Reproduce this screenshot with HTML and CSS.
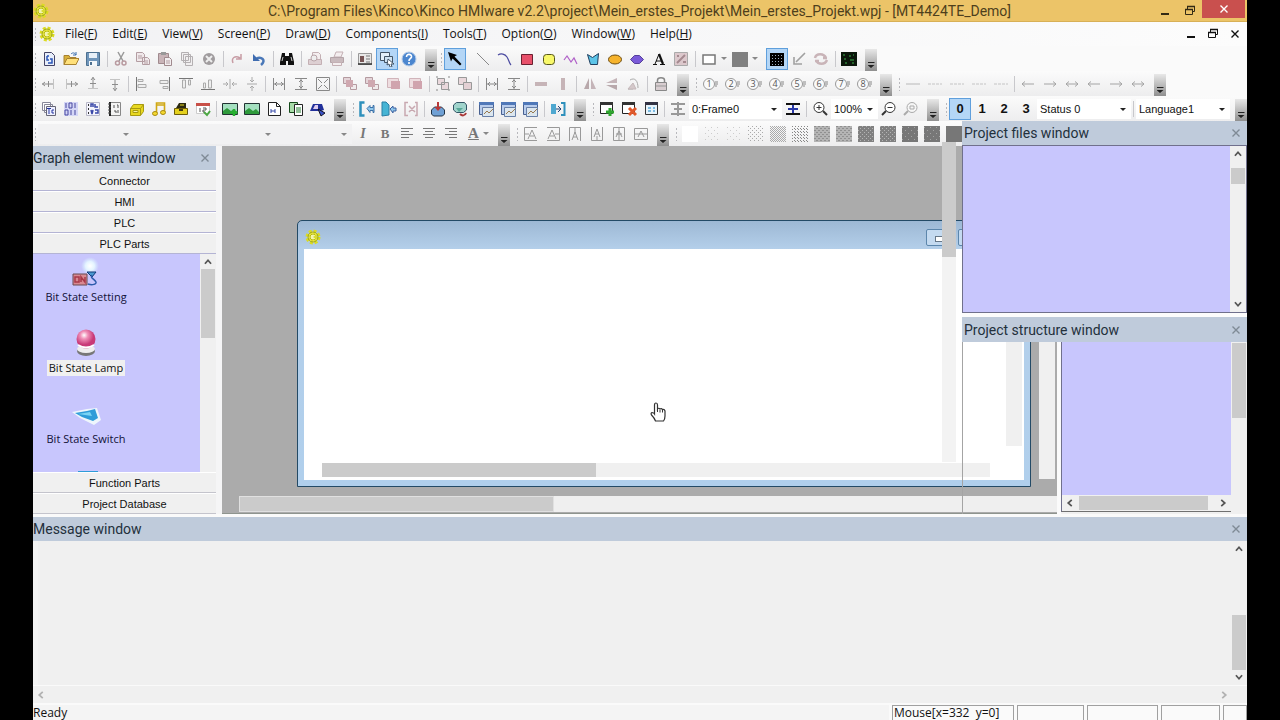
FILE: index.html
```html
<!DOCTYPE html>
<html lang="en">
<head>
<meta charset="utf-8">
<title>Kinco HMIware</title>
<link rel="stylesheet" href="styles.css">
</head>
<body>
<svg class="defs" aria-hidden="true">
<defs>
<pattern id="p1" width="6" height="6" patternUnits="userSpaceOnUse"><path fill="#ccc" d="M1 1h1v1h-1zM4 4h1v1h-1z"/></pattern>
<pattern id="p2" width="4" height="4" patternUnits="userSpaceOnUse"><path fill="#aaa" d="M0 0h1v1h-1zM2 2h1v1h-1z"/></pattern>
<pattern id="p3" width="3" height="3" patternUnits="userSpaceOnUse"><path fill="#888" d="M0 0h1v1h-1zM2 2h1v1h-1z"/></pattern>
<pattern id="p4" width="2" height="2" patternUnits="userSpaceOnUse"><path fill="#aaa" d="M0 0h1v1h-1zM1 1h1v1h-1z"/></pattern>
<pattern id="p5" width="4" height="4" patternUnits="userSpaceOnUse"><path fill="#b4b4b4" d="M0 0h4v4h-4z"/><path fill="#909090" d="M0 0h2v1h-2zM2 2h2v1h-2z"/></pattern>
<pattern id="p6" width="4" height="4" patternUnits="userSpaceOnUse"><path fill="#808080" d="M0 0h4v4h-4z"/><path fill="#b4b4b4" d="M0 0h1v1h-1zM2 2h1v1h-1z"/></pattern>
<pattern id="p7" width="6" height="6" patternUnits="userSpaceOnUse"><path fill="#777" d="M0 0h6v6h-6z"/><path fill="#a4a4a4" d="M0 1h1v1h-1zM3 4h1v1h-1z"/></pattern>
<radialGradient id="lampg" cx=".4" cy=".3"><stop offset="0" stop-color="#fff"/><stop offset=".4" stop-color="#f090b8"/><stop offset="1" stop-color="#c83a78"/></radialGradient>
<radialGradient id="glow"><stop offset="0" stop-color="#fff"/><stop offset=".5" stop-color="#e4f4ff"/><stop offset="1" stop-color="#d4e8ff" stop-opacity="0"/></radialGradient>
</defs>
<symbol id="gear" viewBox="0 0 16 16"><circle cx="8" cy="8" r="5.5" fill="#fff36a" stroke="#dcdc20" stroke-width="4" stroke-dasharray="2.6 1.7"/><circle cx="8" cy="8" r="5" fill="none" stroke="#98a420"/><circle cx="8" cy="8" r="3" fill="#f4f4b0" stroke="#b8bc10"/><path d="M8 8l4-3v6z" fill="#d8dc30"/></symbol>
<symbol id="new" viewBox="0 0 16 16"><path d="M3.500 1.500h7l3 3v10h-10z" fill="#e8eefa" stroke="#446"/><path d="M6 5v4h2M6 5h2M9 8h2v4h-4" fill="none" stroke="#2a56b8" stroke-width="1.500"/></symbol>
<symbol id="open" viewBox="0 0 16 16"><path d="M1 13.500v-9h5l1 2h6v7z" fill="#d8b038" stroke="#a88230"/><path d="M1 13.500l3-6h12l-3 6z" fill="#ffe07a" stroke="#a88230"/><path d="M8 3c2-2 4-1 5 1m0-3v3h-3" fill="none" stroke="#3b6fb0"/></symbol>
<symbol id="save" viewBox="0 0 16 16"><path d="M1.500 1.500h13v13h-13z" fill="#6f95ba" stroke="#4d7090"/><path d="M4 2h8v5h-8z" fill="#e8f0f8"/><path d="M4 10h8v5h-8z" fill="#f5f8fb"/><path d="M5 11h2v3h-2z" fill="#4d7090"/></symbol>
<symbol id="cut" viewBox="0 0 16 16"><path d="M5 1l5 9M11 1l-5 9" stroke="#999" stroke-width="1.500"/><circle cx="4.500" cy="12" r="2" fill="none" stroke="#b89aa0" stroke-width="1.500"/><circle cx="11" cy="12" r="2" fill="none" stroke="#b89aa0" stroke-width="1.500"/></symbol>
<symbol id="copy" viewBox="0 0 16 16"><path d="M1.500 1.500h6l2 2v7h-8zM7.500 6.500h5l2 2v5h-7z" fill="#f0e8ea" stroke="#b39da2"/><path d="M3 5h4M3 7h4M9 10h4M9 12h4" stroke="#b39da2"/></symbol>
<symbol id="paste" viewBox="0 0 16 16"><path d="M1.500 2.500h10v10h-10z" fill="#c9b4b8" stroke="#a08a8e"/><path d="M4 1h5v3h-5z" fill="#999"/><path d="M7.500 6.500h5l2 2v6h-7z" fill="#f3eef0" stroke="#a08a8e"/><path d="M9 10h4M9 12h4" stroke="#b39da2"/></symbol>
<symbol id="dup" viewBox="0 0 16 16"><path d="M2.500 1.500h7v8h-7zM4.500 3.500h7v8h-7zM6.500 5.500h7v9h-7z" fill="#f1eff0" stroke="#b4b0b2"/></symbol>
<symbol id="del" viewBox="0 0 16 16"><circle cx="8" cy="8" r="6" fill="#a09c9e"/><path d="M5 5l6 6M11 5l-6 6" stroke="#eee" stroke-width="2"/></symbol>
<symbol id="redo" viewBox="0 0 16 16"><path d="M4 12c-2-5 2-8 7-5M12 3v5h-5" fill="none" stroke="#c79ca4" stroke-width="1.500"/></symbol>
<symbol id="undo" viewBox="0 0 16 16"><path d="M10 14c6-5 0-9-5-6" fill="none" stroke="#4a78b8" stroke-width="2.500"/><path d="M2 3v7h7z" fill="#3f6cb0"/></symbol>
<symbol id="find" viewBox="0 0 16 16"><path d="M3 2h3v3h4v-3h3l2 9v3h-6v-4h-2v4h-6v-3z" fill="#111"/><path d="M4 6l-1 4M12 6l1 4" stroke="#ccc"/></symbol>
<symbol id="preview" viewBox="0 0 16 16"><path d="M5.500 1.500h6l2 2v6h-8z" fill="#f4eeef" stroke="#c4b0b4"/><path d="M1.500 8.500h13v5h-13z" fill="#ddcfd2" stroke="#c4b0b4"/><circle cx="7" cy="7" r="3" fill="#eee" stroke="#b8a4a8"/></symbol>
<symbol id="print" viewBox="0 0 16 16"><path d="M5 6l2-5h7l-2 5z" fill="#f4eeef" stroke="#c4b0b4"/><path d="M1.500 6.500h13v5h-13z" fill="#c9babd" stroke="#b4a4a8"/><path d="M3.500 11.500h9v3h-9z" fill="#f4eeef" stroke="#c4b0b4"/></symbol>
<symbol id="prop" viewBox="0 0 16 16"><path d="M1.500 2.500h13v11h-13z" fill="#e8e8e8" stroke="#999"/><path d="M1 13h14" stroke="#333" stroke-width="1.500"/><path d="M3 5h4v6h-4z" fill="#755"/><path d="M9 5h4M9 8h4M9 11h4" stroke="#777"/></symbol>
<symbol id="winsel" viewBox="0 0 16 16"><path d="M1.500 1.500h9v8h-9z" fill="#e4f0fa" stroke="#456"/><path d="M5.500 5.500h8v6h-8z" fill="#cfe2f2" stroke="#456"/><path d="M9 8l6 5h-3l1 3h-2l-1-3-2 1z" fill="#fff" stroke="#456"/></symbol>
<symbol id="help" viewBox="0 0 16 16"><circle cx="8" cy="8" r="7" fill="#4b86cf" stroke="#b8cde8"/><path d="M5.500 6c0-4 5.500-3 5 0-.5 2-2.500 1.500-2.500 4M8 11v2" fill="none" stroke="#fff" stroke-width="1.600"/></symbol>
<symbol id="ptr" viewBox="0 0 16 16"><path d="M1 1l9 3-2.500 1.500 7 7.500-1.500 1.500-7.500-7-1.500 3z" fill="#000"/></symbol>
<symbol id="line" viewBox="0 0 16 16"><path d="M2 2l12 12" stroke="#888"/></symbol>
<symbol id="arc" viewBox="0 0 16 16"><path d="M1 4c3-2 7-1 9 2s2 6 4 8" fill="none" stroke="#4a4aa0" stroke-width="1.200"/></symbol>
<symbol id="rect" viewBox="0 0 16 16"><path d="M2.500 3.500h11v10h-11z" fill="#e8506a" stroke="#6a2030"/></symbol>
<symbol id="rrect" viewBox="0 0 16 16"><rect x="2.500" y="3.500" width="11" height="10" rx="3" fill="#f8f86a" stroke="#55551a"/></symbol>
<symbol id="poly" viewBox="0 0 16 16"><path d="M1 9l3-4 4 6 3-4 3 6" fill="none" stroke="#b060c8" stroke-width="1.200"/></symbol>
<symbol id="pgon" viewBox="0 0 16 16"><path d="M2.500 3.500l5 3 6-4-1 11-7 0z" fill="#5cc4e8" stroke="#1e3e5e"/></symbol>
<symbol id="ell" viewBox="0 0 16 16"><ellipse cx="8" cy="8.500" rx="6.500" ry="4.500" fill="#f6b32c" stroke="#6a4a10"/></symbol>
<symbol id="pie" viewBox="0 0 16 16"><path d="M1.500 8.500l4-4h5l4 4-4 4h-5z" fill="#7a5ad8" stroke="#55409a"/></symbol>
<symbol id="txt" viewBox="0 0 16 16"><path d="M2 13.500h4M9 13.500h5M4 13l4-10" fill="none" stroke="#111"/><path d="M8 3l4 10" stroke="#111" stroke-width="2.200"/><path d="M5 10h5" stroke="#111"/></symbol>
<symbol id="pic" viewBox="0 0 16 16"><path d="M1.500 1.500h13v13h-13z" fill="#dcc8cc" stroke="#aaa"/><path d="M4 12l8-8M4 5h2M10 11h3" stroke="#a58a90" stroke-width="2"/></symbol>
<symbol id="frm" viewBox="0 0 16 16"><path d="M2 4h12v9h-12z" fill="#fff" stroke="#777" stroke-width="1.500"/></symbol>
<symbol id="sq" viewBox="0 0 16 16"><path d="M0 1h16v15h-16z" fill="#808080"/></symbol>
<symbol id="grid" viewBox="0 0 16 16"><path d="M1 2h14v13h-14z" fill="#000"/><path d="M3 4.500h11M3 7.500h11M3 10.500h11M3 13.500h11" stroke="#9ab" stroke-dasharray="1 2"/></symbol>
<symbol id="snap" viewBox="0 0 16 16"><path d="M14 2l-9 9M3 6v7h8" fill="none" stroke="#a0a0a0" stroke-width="1.600"/></symbol>
<symbol id="rot" viewBox="0 0 16 16"><path d="M2 7c1-5 9-5 11 0M14 9c-2 5-9 5-11 0M10 7h4M6 10h-4" fill="none" stroke="#c9b4b8" stroke-width="2.500"/></symbol>
<symbol id="scr" viewBox="0 0 16 16"><path d="M0 1h16v14h-16z" fill="#0a160a"/><path d="M2 4h2M8 5h2M3 8h2M9 9h4M4 12h2M11 12h2M12 4h1" stroke="#3db04a"/></symbol>
<symbol id="mvl" viewBox="0 0 16 16"><path d="M1 8h11M4 6l-2.500 2 2.500 2" fill="none" stroke="#8c8c8c"/><path d="M7.500 5v6" stroke="#8c8c8c"/><path d="M12.500 3v10" stroke="#c4c4c4"/></symbol>
<symbol id="al" viewBox="0 0 16 16"><path d="M2.500 1v14" stroke="#777"/><path d="M4 3.500h5v2h-5zM4 8.500h8v3h-8z" fill="#eee" stroke="#aaa"/></symbol>
<symbol id="dist" viewBox="0 0 16 16"><path d="M2.500 2v12M13.500 2v12M3 8h10M6 6l-2 2 2 2M10 6l2 2-2 2" fill="none" stroke="#888"/></symbol>
<symbol id="ctr" viewBox="0 0 16 16"><path d="M1 8h5M10 8h5M4 6l2 2-2 2M12 6l-2 2 2 2M8 3v10" fill="none" stroke="#aaa"/></symbol>
<symbol id="same" viewBox="0 0 16 16"><path d="M1.500 1.500h13v13h-13z" fill="none" stroke="#888"/><path d="M3 3l4 4M13 3l-4 4M3 13l4-4M13 13l-4-4" stroke="#888"/></symbol>
<symbol id="lay" viewBox="0 0 16 16"><path d="M1.500 1.500h7v6h-7z" fill="#e4d4d8" stroke="#b49aa0"/><path d="M8.500 8.500h6v5h-6z" fill="#f0eaeb" stroke="#b49aa0"/><path d="M4 4h7v7h-7z" fill="#cfa8b0"/></symbol>
<symbol id="lay2" viewBox="0 0 16 16"><path d="M1.500 2.500h11v9h-11z" fill="#eedde0" stroke="#d0b4ba"/><path d="M5 5h9v8h-9z" fill="#d0a4ae"/></symbol>
<symbol id="grp" viewBox="0 0 16 16"><path d="M2.500 2.500h7v6h-7zM6.500 6.500h7v7h-7z" fill="#ead8dc" stroke="#999"/><path d="M1 1h2M13 1h2M1 14h2M13 14h2" stroke="#888"/></symbol>
<symbol id="ugrp" viewBox="0 0 16 16"><path d="M1.500 1.500h8v7h-8z" fill="#ead8dc" stroke="#999"/><path d="M6.500 6.500h8v7h-8z" fill="#e4d0d4" stroke="#999"/></symbol>
<symbol id="hbar" viewBox="0 0 16 16"><path d="M2 6h12v4h-12z" fill="#c6b4b7"/></symbol>
<symbol id="mir" viewBox="0 0 16 16"><path d="M7 2v11h-5z" fill="#b8a8ab"/><path d="M9 2v11h5z" fill="#c4b4b8"/></symbol>
<symbol id="rot2" viewBox="0 0 16 16"><path d="M4 4c5-3 8 1 8 8M2 13h5" fill="none" stroke="#aaa"/><path d="M2 13l5-6 3 6z" fill="#d4c8ca" stroke="#c4b8ba"/></symbol>
<symbol id="lock" viewBox="0 0 16 16"><path d="M4.500 7v-3c0-3 7-3 7 0v3" fill="none" stroke="#888" stroke-width="1.500"/><path d="M2.500 6.500h11v8h-11z" fill="#d8cdd0" stroke="#888"/><path d="M3 10h10" stroke="#999"/></symbol>
<symbol id="ln" viewBox="0 0 16 16"><path d="M1 8h14" stroke="#b8b8b8"/></symbol>
<symbol id="dash" viewBox="0 0 16 16"><path d="M1 8h14" stroke="#c4c4c4" stroke-dasharray="3 1"/></symbol>
<symbol id="la" viewBox="0 0 16 16"><path d="M2 8h12M5 5.500l-3 2.500 3 2.500" fill="none" stroke="#a4a4a4"/></symbol>
<symbol id="da" viewBox="0 0 16 16"><path d="M2 8h12M5 5.500l-3 2.500 3 2.500M11 5.500l3 2.500-3 2.500" fill="none" stroke="#a4a4a4"/></symbol>
<symbol id="num" viewBox="0 0 16 16"><circle cx="7" cy="8" r="5.500" fill="#fafafa" stroke="#999"/><path d="M13 6h3M13 8h3M13 10h2" stroke="#888"/></symbol>
<symbol id="tc" viewBox="0 0 16 16"><path d="M1.500 1.500h8v8h-8zM3.500 3.500h8v8h-8z" fill="#fff" stroke="#889"/><path d="M5.500 5.500h9v9h-9z" fill="#eef0ff" stroke="#667"/><path d="M6 7.500h4M8 8v5M13 9h-2v3h2" fill="none" stroke="#2434a0"/></symbol>
<symbol id="bin" viewBox="0 0 16 16"><path d="M1 1h14v14h-14z" fill="#d4d6f6"/><path d="M3 2v5M6 2h3v5h-3zM12 2v5M2 9h3v5h-3zM8 9v5M12 9v5" fill="none" stroke="#4848a0"/></symbol>
<symbol id="tbl" viewBox="0 0 16 16"><path d="M1.500 1.500h13v13h-13z" fill="#f4f4fc" stroke="#b8b8c8"/><path d="M3 4h1M3 8h1M3 12h1" stroke="#333" stroke-width="2"/><path d="M6 6v-3h2v3M10 3v3h3M6 9l1 4 1-4M10 9h3v3h-3" fill="none" stroke="#3a48a8" stroke-width="1.500"/></symbol>
<symbol id="book" viewBox="0 0 16 16"><path d="M3.500 1.500h10v13h-10z" fill="#f4f4f4" stroke="#888"/><path d="M3 1v14" stroke="#222" stroke-width="2"/><path d="M1 3h3M1 6h3M1 9h3M1 12h3M7 4v3M10 4h1v3M7 10h2v2M11 9v3" fill="none" stroke="#555"/></symbol>
<symbol id="box" viewBox="0 0 16 16"><path d="M1.500 7.500l3-4h10v7l-3 4h-10z" fill="#e8d820" stroke="#a89a10"/><path d="M1.500 7.500h10l3-4M11.500 7.500v7" fill="none" stroke="#a89a10"/><path d="M4 9.500h5v2h-5z" fill="#f8f4a0" stroke="#a89a10"/></symbol>
<symbol id="note" viewBox="0 0 16 16"><path d="M5.500 12v-10h8v9M5.500 4h8" fill="none" stroke="#d0a814" stroke-width="1.600"/><ellipse cx="4" cy="12.500" rx="2.500" ry="2" fill="#f4d830" stroke="#a88a10"/><ellipse cx="12" cy="11.500" rx="2.500" ry="2" fill="#f4d830" stroke="#a88a10"/></symbol>
<symbol id="case" viewBox="0 0 16 16"><path d="M3 7l3-5h7v5z" fill="#2c2a10"/><path d="M7 4h4" stroke="#e8d820"/><path d="M1.500 7.500h13v6h-13z" fill="#e4d01e" stroke="#6c5c0a"/><path d="M6 8h4v2h-4z" fill="#443a10"/></symbol>
<symbol id="cal" viewBox="0 0 16 16"><path d="M1.500 2.500h13v10h-13z" fill="#fff" stroke="#ccc"/><path d="M1 2h14v3h-14z" fill="#c85048"/><path d="M5 7v4M8 7h3v2h-3v2h2" fill="none" stroke="#555"/><path d="M9 11l3 3 3-4" fill="none" stroke="#4da844" stroke-width="2"/></symbol>
<symbol id="img" viewBox="0 0 16 16"><path d="M.5 2.500h15v11h-15z" fill="#a4e0c0" stroke="#233"/><path d="M1 10l4-3 4 3 3-2 3 3v2h-14z" fill="#2f9a3c"/></symbol>
<symbol id="imga" viewBox="0 0 16 16"><use href="#img"/><path d="M12 8v7M8.500 11.500h7" stroke="#26b030" stroke-width="2.500"/></symbol>
<symbol id="pg" viewBox="0 0 16 16"><path d="M2.500 1.500h8l4 4v9h-12z" fill="#fff" stroke="#222"/><path d="M10.500 1.500v4h4" fill="none" stroke="#222"/><path d="M5 8v4M5 10h4M9 8v4" stroke="#3448a8"/></symbol>
<symbol id="pgg" viewBox="0 0 16 16"><path d="M1.500 1.500h8v10h-8z" fill="#a8dca8" stroke="#154a1a"/><path d="M6.500 3.500h8v11h-8z" fill="#fff" stroke="#222"/><path d="M8 7h5M8 9h5M8 11h5" stroke="#258030"/></symbol>
<symbol id="car" viewBox="0 0 16 16"><path d="M0 10l3-7h9l2 6-3 1z" fill="#22309a"/><path d="M3 8l2-4h3v4z" fill="#dce"/><path d="M8 8l7 4-4 3z" fill="#3a52c8" stroke="#112"/></symbol>
<symbol id="brk" viewBox="0 0 16 16"><path d="M5.500 1.500h-4v13h4" fill="none" stroke="#2e90bc" stroke-width="2.500"/><path d="M8 7.500l3-3v2h3v-2h1v7h-1v-2h-3v2z" fill="#90c8ec" stroke="#3a70a8"/></symbol>
<symbol id="brk2" viewBox="0 0 16 16"><path d="M1 1h4l3 3v10l-7 1z" fill="#46b4d4" stroke="#2a7ea4"/><path d="M9 8l3-3v2h3v3h-3v2z" fill="#90c8ec" stroke="#3a60a0"/></symbol>
<symbol id="brkx" viewBox="0 0 16 16"><path d="M5 1.500h-3v13h3M12 1.500h2v13h-2M6 5l6 6M12 5l-6 6" fill="none" stroke="#c8a8b0" stroke-width="1.500"/></symbol>
<symbol id="dl" viewBox="0 0 16 16"><path d="M1.500 9l3-3h7l3 3v4l-2 2h-9l-2-2z" fill="#6fa0d4" stroke="#234"/><path d="M8 1v7" stroke="#b83838" stroke-width="2"/><path d="M4.500 6h7l-3.500 4z" fill="#b83838"/></symbol>
<symbol id="ul" viewBox="0 0 16 16"><path d="M1.500 4l3-2.500h8l2 2.500v5l-3 2.500h-7l-3-2.500z" fill="#a0d4cc" stroke="#356"/><path d="M4 7h7l-4 4z" fill="#58a898"/><path d="M8 13c2 2 5 2 6-1" fill="none" stroke="#a83838" stroke-width="2"/></symbol>
<symbol id="win" viewBox="0 0 16 16"><path d="M.5 1.500h14v12h-14z" fill="#b8ccec" stroke="#486090"/><path d="M0 1h15v3h-15z" fill="#5078b8"/><path d="M3.500 15.500v-9h11v9z" fill="#dce6ee" stroke="#6880a8"/><path d="M5 13l3-3 2 2 4-4" fill="none" stroke="#987a50"/></symbol>
<symbol id="lnk" viewBox="0 0 16 16"><path d="M1 3h5v10h-5z" fill="#4fa8d0"/><path d="M11 2h3.500v12h-3.500" fill="none" stroke="#2e90bc" stroke-width="2"/><path d="M6 8h5M8 5l3 3-3 3" stroke="#247" fill="none"/></symbol>
<symbol id="fadd" viewBox="0 0 16 16"><path d="M1.500 1.500h12v11h-12z" fill="#fff" stroke="#222"/><path d="M1 1h13v3h-13z" fill="#333"/><path d="M11 7v8M7 11h8" stroke="#2fa52f" stroke-width="3"/></symbol>
<symbol id="fdel" viewBox="0 0 16 16"><path d="M1.500 1.500h12v11h-12z" fill="#fff" stroke="#222"/><path d="M1 1h13v3h-13z" fill="#333"/><path d="M8 7l7 7M15 7l-7 7" stroke="#e0582a" stroke-width="3"/></symbol>
<symbol id="flst" viewBox="0 0 16 16"><path d="M2.500 1.500h12v12h-12z" fill="#e8f4fc" stroke="#333"/><path d="M2 1h13v3h-13z" fill="#334"/><path d="M5 7h3M10 7h2M5 10h3M10 10h2" stroke="#58a8d8" stroke-width="1.500"/></symbol>
<symbol id="skipg" viewBox="0 0 16 16"><path d="M1 3h6M9 3h6M1 13h6M9 13h6M4 8h8M8 1v14" stroke="#999" stroke-width="2"/></symbol>
<symbol id="skip" viewBox="0 0 16 16"><path d="M1 3h14M1 13h14" stroke="#111" stroke-width="2"/><path d="M3 8h10M8 4v8" stroke="#2838a8" stroke-width="2"/></symbol>
<symbol id="zin" viewBox="0 0 16 16"><circle cx="7" cy="6.500" r="5" fill="#fff" stroke="#333"/><path d="M11 10l4 4" stroke="#333" stroke-width="2"/><path d="M4.500 6.500h5M7 4v5" stroke="#333"/></symbol>
<symbol id="zout" viewBox="0 0 16 16"><circle cx="9" cy="6.500" r="5" fill="#fff" stroke="#333"/><path d="M5 10l-4 4" stroke="#333" stroke-width="2"/><path d="M6.500 6.500h5" stroke="#333"/></symbol>
<symbol id="zfit" viewBox="0 0 16 16"><circle cx="9" cy="6.500" r="5" fill="#f6f6f6" stroke="#aaa"/><path d="M5 10l-4 4" stroke="#aaa" stroke-width="2"/><path d="M7 5h4v3h-4z" fill="none" stroke="#aaa"/></symbol>
<symbol id="tl" viewBox="0 0 16 16"><path d="M2 2.500h12M2 5.500h8M2 8.500h12M2 11.500h8" stroke="#777"/></symbol>
<symbol id="tcn" viewBox="0 0 16 16"><path d="M2 2.500h12M4 5.500h8M2 8.500h12M4 11.500h8" stroke="#777"/></symbol>
<symbol id="tr" viewBox="0 0 16 16"><path d="M2 2.500h12M6 5.500h8M2 8.500h12M6 11.500h8" stroke="#777"/></symbol>
<symbol id="fl" viewBox="0 0 16 16"><path d="M14 1.500h-12.500v13h12.500M2 8h4M5 13l4-9 4 9M7 10h4" fill="none" stroke="#999"/></symbol>
<symbol id="fr" viewBox="0 0 16 16"><path d="M2 1.500h12.500v13h-12.500M10 8h4M3 13l4-9 4 9M5 10h4" fill="none" stroke="#999"/></symbol>
<symbol id="ft" viewBox="0 0 16 16"><path d="M2.500 15v-13.500h11v13.500M8 2v5M5 14l3-8 3 8M6 11h4" fill="none" stroke="#999"/></symbol>
<symbol id="fb" viewBox="0 0 16 16"><path d="M2.500 1v13.500h11v-13.500M8 10v4M5 11l3-8 3 8M6 8h4" fill="none" stroke="#999"/></symbol>
<symbol id="fm" viewBox="0 0 16 16"><path d="M2.500 1.500h11v13h-11zM8 2v12M5 11l3-6 3 6M5 8h6" fill="none" stroke="#999"/></symbol>
<symbol id="fc" viewBox="0 0 16 16"><path d="M1.500 2.500h13v11h-13zM2 8h12M5 11l3-6 3 6" fill="none" stroke="#999"/></symbol>
<symbol id="up" viewBox="0 0 16 16"><path d="M4.500 10l3.500-4 3.500 4" fill="none" stroke="#555" stroke-width="2"/></symbol>
<symbol id="x" viewBox="0 0 16 16"><path d="M4.500 4.500l7 7M11.500 4.500l-7 7" fill="none" stroke="currentColor" stroke-width="1.400"/></symbol>
<symbol id="min" viewBox="0 0 16 16"><path d="M4 11h8" stroke="currentColor" stroke-width="2"/></symbol>
<symbol id="rest" viewBox="0 0 16 16"><path d="M3.500 6.500h7v5h-7zM5.500 6v-2.500h7v5h-2" fill="none" stroke="currentColor"/><path d="M3 6.500h8M5 3.500h8" stroke="currentColor" stroke-width="1.500"/></symbol>
</svg>

<div class="app">
<header class="title"><svg class="ic"><use href="#gear"/></svg><h1>C:\Program Files\Kinco\Kinco HMIware v2.2\project\Mein_erstes_Projekt\Mein_erstes_Projekt.wpj - [MT4424TE_Demo]</h1>
<div class="wbtns"><button aria-label="Minimize"><svg class="ic"><use href="#min"/></svg></button><button aria-label="Restore"><svg class="ic"><use href="#rest"/></svg></button><button class="close" aria-label="Close"><svg class="ic"><use href="#x"/></svg></button></div></header>

<nav class="menu"><i class="grip"></i><svg class="ic"><use href="#gear"/></svg>
<button>File(<u>F</u>)</button><button>Edit(<u>E</u>)</button><button>View(<u>V</u>)</button><button>Screen(<u>P</u>)</button><button>Draw(<u>D</u>)</button><button>Components(<u>I</u>)</button><button>Tools(<u>T</u>)</button><button>Option(<u>O</u>)</button><button>Window(<u>W</u>)</button><button>Help(<u>H</u>)</button>
<div class="docbtns"><button aria-label="Minimize document"><svg class="ic"><use href="#min"/></svg></button><button aria-label="Restore document"><svg class="ic"><use href="#rest"/></svg></button><button aria-label="Close document"><svg class="ic"><use href="#x"/></svg></button></div></nav>

<div class="row row-main">
<div class="bar"><i class="grip"></i><button class="tb" aria-label="New"><svg><use href="#new"/></svg></button><button class="tb" aria-label="Open"><svg><use href="#open"/></svg></button><button class="tb" aria-label="Save"><svg><use href="#save"/></svg></button><i class="sep"></i><button class="tb" aria-label="Cut"><svg><use href="#cut"/></svg></button><button class="tb" aria-label="Copy"><svg><use href="#copy"/></svg></button><button class="tb" aria-label="Paste"><svg><use href="#paste"/></svg></button><button class="tb" aria-label="Multi-copy"><svg><use href="#dup"/></svg></button><button class="tb" aria-label="Delete"><svg><use href="#del"/></svg></button><i class="sep"></i><button class="tb" aria-label="Redo"><svg><use href="#redo"/></svg></button><button class="tb" aria-label="Undo"><svg><use href="#undo"/></svg></button><i class="sep"></i><button class="tb" aria-label="Find"><svg><use href="#find"/></svg></button><i class="sep"></i><button class="tb" aria-label="Preview"><svg><use href="#preview"/></svg></button><button class="tb" aria-label="Print"><svg><use href="#print"/></svg></button><i class="sep"></i><button class="tb" aria-label="Properties"><svg><use href="#prop"/></svg></button><button class="tb on" aria-label="Windows"><svg><use href="#winsel"/></svg></button><button class="tb" aria-label="Help"><svg><use href="#help"/></svg></button><button class="more" aria-label="More"></button></div>
<div class="bar"><i class="grip"></i><button class="tb on" aria-label="Select"><svg><use href="#ptr"/></svg></button><i class="sep clear"></i><button class="tb" aria-label="Line"><svg><use href="#line"/></svg></button><button class="tb" aria-label="Arc"><svg><use href="#arc"/></svg></button><button class="tb" aria-label="Rectangle"><svg><use href="#rect"/></svg></button><button class="tb" aria-label="Rounded rectangle"><svg><use href="#rrect"/></svg></button><button class="tb" aria-label="Polyline"><svg><use href="#poly"/></svg></button><button class="tb" aria-label="Polygon"><svg><use href="#pgon"/></svg></button><button class="tb" aria-label="Ellipse"><svg><use href="#ell"/></svg></button><button class="tb" aria-label="Shape"><svg><use href="#pie"/></svg></button><button class="tb" aria-label="Text"><svg><use href="#txt"/></svg></button><button class="tb" aria-label="Picture"><svg><use href="#pic"/></svg></button><i class="sep"></i><button class="tb drop" aria-label="Line colour"><svg><use href="#frm"/></svg></button><button class="tb drop" aria-label="Fill colour"><svg><use href="#sq"/></svg></button><i class="sep clear"></i><button class="tb on" aria-label="Grid"><svg><use href="#grid"/></svg></button><button class="tb" aria-label="Snap"><svg><use href="#snap"/></svg></button><button class="tb" aria-label="Refresh"><svg><use href="#rot"/></svg></button><i class="sep"></i><button class="tb" aria-label="Simulate"><svg><use href="#scr"/></svg></button><button class="more" aria-label="More"></button></div>
</div>

<div class="row">
<div class="bar"><i class="grip"></i><button class="tb" aria-label="Nudge left"><svg><use href="#mvl"/></svg></button><button class="tb r180" aria-label="Nudge right"><svg><use href="#mvl"/></svg></button><button class="tb r90" aria-label="Nudge up"><svg><use href="#mvl"/></svg></button><button class="tb r270" aria-label="Nudge down"><svg><use href="#mvl"/></svg></button><i class="sep"></i><button class="tb" aria-label="Align left"><svg><use href="#al"/></svg></button><button class="tb r180" aria-label="Align right"><svg><use href="#al"/></svg></button><button class="tb r90" aria-label="Align top"><svg><use href="#al"/></svg></button><button class="tb r270" aria-label="Align bottom"><svg><use href="#al"/></svg></button><button class="tb" aria-label="Centre horizontally"><svg><use href="#ctr"/></svg></button><button class="tb r90" aria-label="Centre vertically"><svg><use href="#ctr"/></svg></button><i class="sep"></i><button class="tb" aria-label="Same width"><svg><use href="#dist"/></svg></button><button class="tb r90" aria-label="Same height"><svg><use href="#dist"/></svg></button><button class="tb" aria-label="Same size"><svg><use href="#same"/></svg></button><i class="sep"></i><button class="tb" aria-label="To front"><svg><use href="#lay"/></svg></button><button class="tb" aria-label="To back"><svg><use href="#lay"/></svg></button><button class="tb" aria-label="Forward"><svg><use href="#lay2"/></svg></button><button class="tb" aria-label="Backward"><svg><use href="#lay2"/></svg></button><i class="sep"></i><button class="tb" aria-label="Group"><svg><use href="#grp"/></svg></button><button class="tb" aria-label="Ungroup"><svg><use href="#ugrp"/></svg></button><i class="sep"></i><button class="tb" aria-label="Space across"><svg><use href="#dist"/></svg></button><button class="tb r90" aria-label="Space down"><svg><use href="#dist"/></svg></button><i class="sep"></i><button class="tb" aria-label="Horizontal"><svg><use href="#hbar"/></svg></button><button class="tb r90" aria-label="Vertical"><svg><use href="#hbar"/></svg></button><i class="sep"></i><button class="tb" aria-label="Mirror horizontal"><svg><use href="#mir"/></svg></button><button class="tb r270" aria-label="Mirror vertical"><svg><use href="#mir"/></svg></button><button class="tb" aria-label="Rotate"><svg><use href="#rot2"/></svg></button><i class="sep"></i><button class="tb" aria-label="Lock"><svg><use href="#lock"/></svg></button><button class="more" aria-label="More"></button></div>
<div class="bar"><i class="grip"></i><button class="tb num"><svg><use href="#num"/></svg><span>1</span></button><button class="tb num"><svg><use href="#num"/></svg><span>2</span></button><button class="tb num"><svg><use href="#num"/></svg><span>3</span></button><button class="tb num"><svg><use href="#num"/></svg><span>4</span></button><button class="tb num"><svg><use href="#num"/></svg><span>5</span></button><button class="tb num"><svg><use href="#num"/></svg><span>6</span></button><button class="tb num"><svg><use href="#num"/></svg><span>7</span></button><button class="tb num"><svg><use href="#num"/></svg><span>8</span></button><button class="more" aria-label="More"></button></div>
<div class="bar"><i class="grip"></i><button class="tb" aria-label="Solid line"><svg><use href="#ln"/></svg></button><button class="tb" aria-label="Dashed line"><svg><use href="#dash"/></svg></button><button class="tb" aria-label="Dotted line"><svg><use href="#dash"/></svg></button><button class="tb" aria-label="Dash-dot line"><svg><use href="#dash"/></svg></button><button class="tb" aria-label="Dash-dot-dot line"><svg><use href="#dash"/></svg></button><i class="sep"></i><button class="tb" aria-label="Arrow left"><svg><use href="#la"/></svg></button><button class="tb r180" aria-label="Arrow right"><svg><use href="#la"/></svg></button><button class="tb" aria-label="Arrow both"><svg><use href="#da"/></svg></button><button class="tb" aria-label="Solid arrow left"><svg><use href="#la"/></svg></button><button class="tb r180" aria-label="Solid arrow right"><svg><use href="#la"/></svg></button><button class="tb" aria-label="Solid arrow both"><svg><use href="#da"/></svg></button><button class="more" aria-label="More"></button></div>
</div>

<div class="row">
<div class="bar"><i class="grip"></i><button class="tb" aria-label="Text library"><svg><use href="#tc"/></svg></button><button class="tb" aria-label="Address tags"><svg><use href="#bin"/></svg></button><button class="tb" aria-label="Alarm table"><svg><use href="#tbl"/></svg></button><button class="tb" aria-label="Event log"><svg><use href="#book"/></svg></button><button class="tb" aria-label="Recipe"><svg><use href="#box"/></svg></button><button class="tb" aria-label="Sound"><svg><use href="#note"/></svg></button><button class="tb" aria-label="Toolbox"><svg><use href="#case"/></svg></button><button class="tb" aria-label="Schedule"><svg><use href="#cal"/></svg></button><i class="sep"></i><button class="tb" aria-label="Add image"><svg><use href="#imga"/></svg></button><button class="tb" aria-label="Image library"><svg><use href="#img"/></svg></button><button class="tb" aria-label="Macro"><svg><use href="#pg"/></svg></button><button class="tb" aria-label="Import"><svg><use href="#pgg"/></svg></button><button class="tb" aria-label="Vector graphics"><svg><use href="#car"/></svg></button><button class="more" aria-label="More"></button></div>
<div class="bar"><i class="grip"></i><button class="tb" aria-label="Compile"><svg><use href="#brk"/></svg></button><button class="tb" aria-label="Compile all"><svg><use href="#brk2"/></svg></button><button class="tb" aria-label="Cancel"><svg><use href="#brkx"/></svg></button><i class="sep"></i><button class="tb" aria-label="Download"><svg><use href="#dl"/></svg></button><button class="tb" aria-label="Upload"><svg><use href="#ul"/></svg></button><i class="sep"></i><button class="tb" aria-label="Offline simulation"><svg><use href="#win"/></svg></button><button class="tb" aria-label="Indirect simulation"><svg><use href="#win"/></svg></button><button class="tb" aria-label="Direct simulation"><svg><use href="#win"/></svg></button><i class="sep"></i><button class="tb" aria-label="Connect"><svg><use href="#lnk"/></svg></button><button class="more" aria-label="More"></button></div>
<div class="bar"><i class="grip"></i><button class="tb" aria-label="Add frame"><svg><use href="#fadd"/></svg></button><button class="tb" aria-label="Delete frame"><svg><use href="#fdel"/></svg></button><button class="tb" aria-label="Frame list"><svg><use href="#flst"/></svg></button><i class="sep"></i><button class="tb" aria-label="Previous frame"><svg><use href="#skipg"/></svg></button><label class="combo c-frame"><select aria-label="Frame"><option>0:Frame0</option></select></label><button class="tb" aria-label="Next frame"><svg><use href="#skip"/></svg></button><i class="sep"></i><button class="tb" aria-label="Zoom in"><svg><use href="#zin"/></svg></button><label class="combo c-zoom"><select aria-label="Zoom"><option>100%</option></select></label><button class="tb" aria-label="Zoom out"><svg><use href="#zout"/></svg></button><button class="tb" aria-label="Zoom to fit"><svg><use href="#zfit"/></svg></button><button class="more" aria-label="More"></button></div>
<div class="bar"><i class="grip"></i><button class="tb st on">0</button><button class="tb st">1</button><button class="tb st">2</button><button class="tb st">3</button><label class="combo c-status"><select aria-label="Status"><option>Status 0</option></select></label><i class="sep"></i><label class="combo c-status"><select aria-label="Language"><option>Language1</option></select></label><button class="more" aria-label="More"></button></div>
</div>

<div class="work">
<div class="row fmt">
<div class="bar"><i class="grip"></i><label class="combo off c-font"><select aria-label="Font" disabled><option></option></select></label><label class="combo off c-face"><select aria-label="Script" disabled><option></option></select></label><label class="combo off c-size"><select aria-label="Size" disabled><option></option></select></label><button class="tb ital">I</button><button class="tb bold">B</button><button class="tb" aria-label="Left"><svg><use href="#tl"/></svg></button><button class="tb" aria-label="Centre"><svg><use href="#tcn"/></svg></button><button class="tb" aria-label="Right"><svg><use href="#tr"/></svg></button><button class="tb drop fcol"><u>A</u></button><button class="more" aria-label="More"></button></div>
<div class="bar"><i class="grip"></i><button class="tb" aria-label="Text left"><svg><use href="#fl"/></svg></button><button class="tb" aria-label="Text right"><svg><use href="#fr"/></svg></button><button class="tb" aria-label="Text top"><svg><use href="#ft"/></svg></button><button class="tb" aria-label="Text bottom"><svg><use href="#fb"/></svg></button><button class="tb" aria-label="Text middle"><svg><use href="#fm"/></svg></button><button class="tb" aria-label="Text centre"><svg><use href="#fc"/></svg></button><button class="more" aria-label="More"></button></div>
<div class="bar"><i class="grip"></i><button class="tb" aria-label="No pattern"><svg><rect width="16" height="16" fill="#fff"/></svg></button><button class="tb" aria-label="Pattern 1"><svg><rect width="16" height="16" fill="url(#p1)"/></svg></button><button class="tb" aria-label="Pattern 2"><svg><rect width="16" height="16" fill="url(#p1)"/></svg></button><button class="tb" aria-label="Pattern 3"><svg><rect width="16" height="16" fill="url(#p2)"/></svg></button><button class="tb" aria-label="Pattern 4"><svg><rect width="16" height="16" fill="url(#p4)"/></svg></button><button class="tb" aria-label="Pattern 5"><svg><rect width="16" height="16" fill="url(#p3)"/></svg></button><button class="tb" aria-label="Pattern 6"><svg><rect width="16" height="16" fill="url(#p5)"/></svg></button><button class="tb" aria-label="Pattern 7"><svg><rect width="16" height="16" fill="url(#p5)"/></svg></button><button class="tb" aria-label="Pattern 8"><svg><rect width="16" height="16" fill="url(#p6)"/></svg></button><button class="tb" aria-label="Pattern 9"><svg><rect width="16" height="16" fill="url(#p6)"/></svg></button><button class="tb" aria-label="Pattern 10"><svg><rect width="16" height="16" fill="url(#p7)"/></svg></button><button class="tb" aria-label="Pattern 11"><svg><rect width="16" height="16" fill="url(#p7)"/></svg></button><button class="tb" aria-label="Pattern 12"><svg><rect width="16" height="16" fill="#777"/></svg></button></div>
</div>

<aside class="graph">
<header class="phead"><h2>Graph element window</h2><button aria-label="Close graph element window"><svg class="ic"><use href="#x"/></svg></button></header>
<button class="tab">Connector</button><button class="tab">HMI</button><button class="tab">PLC</button><button class="tab">PLC Parts</button>
<div class="parts"><ul>
<li><svg viewBox="0 0 32 32"><circle cx="20" cy="9" r="9" fill="url(#glow)"/><path d="M3 17h14v11h-14z" fill="#d88890" stroke="#6a4a50"/><path d="M5 20h4v5h-4zM11 25v-5l4 5v-5" fill="none" stroke="#a83848" stroke-width="1.500"/><path d="M17 15h9l-4 5z" fill="#4a9ad0" stroke="#123a78"/><path d="M22 18c-3 3 5 5 4 8-1 2-5 2-8 1" fill="none" stroke="#2c5cac" stroke-width="1.500"/></svg><span>Bit State Setting</span></li>
<li class="sel"><svg viewBox="0 0 32 32"><ellipse cx="16" cy="23" rx="9" ry="5" fill="#777"/><ellipse cx="16" cy="21" rx="9" ry="4" fill="#eee"/><circle cx="16" cy="11" r="9.500" fill="url(#lampg)"/><path d="M8 17q8 5 16 0" fill="none" stroke="#fff" stroke-width="2"/></svg><span>Bit State Lamp</span></li>
<li><svg viewBox="0 0 32 32"><path d="M2 13l15-3 10-1 4 12-7 5-14-7z" fill="#eef6fc"/><path d="M5 14l12-2 8-2 3 9-5 3-11-4z" fill="#2e9cd8"/><path d="M8 15l12-2 2 4z" fill="#7ad4f4"/></svg><span>Bit State Switch</span></li>
<li><svg viewBox="0 0 32 32"><path d="M8 1h20v14h-20z" fill="#2e9cd8"/></svg></li>
</ul>
<div class="vs"><button aria-label="Scroll up"><svg class="ic"><use href="#up"/></svg></button><i class="thumb t70"></i></div></div>
<button class="tab low">Function Parts</button><button class="tab low">Project Database</button>
</aside>

<main class="canvas">
<section class="child"><svg class="ic"><use href="#gear"/></svg><i class="cbtn b1"></i><i class="cbtn b2"></i><div class="page"><i class="pv"></i><div class="ph"><i></i></div></div></section>
<i class="cv"></i><div class="chs"><i></i></div>
<div class="ghost"><i></i></div>
<svg class="hand" viewBox="0 0 18 20"><path d="M4.500 10v-7q0-2 1.500-2t1.500 2v4q1-1.500 2.500 0 1.500-1 2.500.5 2-.5 2.500 1.500v5q0 3-1.500 5h-8q-1-3-4-6-1-2 .5-2.500 1.500 0 2.500 1.500z" fill="#fff" stroke="#333" stroke-width="1.200"/><path d="M7.500 7v3M10 8v2.500M12.500 8v2.500" stroke="#333"/></svg>
</main>

<aside class="dock">
<header class="phead"><h2>Project files window</h2><button aria-label="Close project files window"><svg class="ic"><use href="#x"/></svg></button></header>
<div class="files"><div class="vs"><button aria-label="Scroll up"><svg class="ic"><use href="#up"/></svg></button><i class="thumb t16"></i><button class="end flip" aria-label="Scroll down"><svg class="ic"><use href="#up"/></svg></button></div></div>
<header class="phead"><h2>Project structure window</h2><button aria-label="Close project structure window"><svg class="ic"><use href="#x"/></svg></button></header>
<div class="struct"><div class="tree"><div class="fill"></div><div class="hs"><button class="left" aria-label="Scroll left"><svg class="ic"><use href="#up"/></svg></button><i></i><button class="right" aria-label="Scroll right"><svg class="ic"><use href="#up"/></svg></button></div></div><div class="vs"><i class="thumb t75"></i></div></div>
</aside>
</div>

<section class="msg">
<header class="phead"><h2>Message window</h2><button aria-label="Close message window"><svg class="ic"><use href="#x"/></svg></button></header>
<div class="mbody"><div class="mtext"></div><div class="vs"><button aria-label="Scroll up"><svg class="ic"><use href="#up"/></svg></button><i class="thumb t54 end"></i><button class="flip" aria-label="Scroll down"><svg class="ic"><use href="#up"/></svg></button></div></div>
<div class="hs dim"><button class="left" aria-label="Scroll left"><svg class="ic"><use href="#up"/></svg></button><button class="right" aria-label="Scroll right"><svg class="ic"><use href="#up"/></svg></button></div>
</section>
<footer class="status"><span>Ready</span><output>Mouse[x=332&nbsp; y=0]</output><i class="w2"></i><i class="w3"></i><i class="w4"></i><i class="w5"></i></footer>
</div>
</body>
</html>
```
FILE: styles.css
```css
* { box-sizing: border-box; }
body { margin: 0; background: #000; font: 12px/16px "Open Sans", "Noto Sans", sans-serif; color: #111; overflow: hidden; }
button { border: 0; padding: 0; background: none; font: inherit; color: inherit; }
h1, h2, ul { margin: 0; padding: 0; font-weight: 400; list-style: none; }
.defs { position: absolute; width: 0; height: 0; }
.ic { width: 16px; height: 16px; display: block; flex: none; }

.app { height: 100vh; margin: 0 33px; background: #f5f5f6; display: flex; flex-direction: column; overflow: hidden; }

.title { height: 22px; flex: none; display: flex; align-items: center; background: #ecc468; border-bottom: 1px solid #d8b056; color: #4e3f1c; }
.title h1 { flex: 1; text-align: center; font: 14px/20px Roboto, "Open Sans", sans-serif; white-space: nowrap; padding-left: 78px; }
.wbtns { display: flex; align-self: stretch; }
.wbtns button { width: 25px; display: grid; place-items: center; color: #332a14; }
.wbtns .close { width: 43px; height: 18px; background: #c9504e; color: #fff; margin-right: 2px; }

.menu { height: 24px; flex: none; display: flex; align-items: center; background: linear-gradient(90deg, #f2f2f4, #fcfcfc); }
.menu > svg { margin-left: 1px; }
.menu > button { margin-left: 15px; }
.menu > svg + button { margin-left: 10px; }
.docbtns { margin-left: auto; display: flex; gap: 6px; padding-right: 4px; }

.row { height: 25px; flex: none; display: flex; align-items: stretch; background: #fafafa; }
.bar { display: flex; align-items: center; background: linear-gradient(#fbfbfb, #ededee); }
.bar + .bar .grip { margin-left: 5px; }
.row-main .bar + .bar .grip { margin-left: 2px; }
.grip { width: 5px; height: 14px; flex: none; background: radial-gradient(circle at 50% 50%, #b8b8bc 1px, transparent 1px) 0 0 / 5px 4px; }
.sep { width: 5px; height: 16px; flex: none; background: linear-gradient(#c8c8cc, #c8c8cc) center / 1px 100% no-repeat; }
.row-main .sep { width: 6px; }
.sep.clear { background: none; }
.tb { width: 22px; height: 22px; flex: none; display: flex; align-items: center; justify-content: center; position: relative; }
.tb svg { width: 16px; height: 16px; flex: none; }
.tb.on { background: #b4d6f6; border: 1px solid #5f9fdc; }
.tb.drop { width: 31px; justify-content: flex-start; padding-left: 3px; }
.tb.drop::after { content: ""; margin-left: 4px; border: 3px solid transparent; border-top-color: #888; border-bottom: 0; }
.r90 svg { transform: rotate(90deg); }
.r180 svg { transform: rotate(180deg); }
.r270 svg { transform: rotate(270deg); }
.num span { position: absolute; left: 7px; top: 3px; width: 6px; font-size: 9px; text-align: center; color: #555; }
.st { font: bold 13px "Liberation Sans", Arial, sans-serif; }
.ital { font: italic bold 14px "Liberation Serif", serif; color: #777; }
.bold { font: bold 13px "Liberation Serif", serif; color: #777; }
.fcol { font: bold 15px "Liberation Serif", serif; color: #777; }
.tb.fcol { padding-left: 6px; }
.more { width: 12px; height: 22px; margin-left: 5px; flex: none; align-self: flex-end; background: linear-gradient(#e8e8e8, #8f8f8f); display: flex; align-items: flex-end; justify-content: center; padding-bottom: 3px; }
.more::after { content: ""; width: 7px; height: 6px; background: #222; clip-path: polygon(0 0, 100% 0, 100% 1px, 0 1px, 0 3px, 100% 3px, 50% 100%, 0 3px); }
.combo { position: relative; height: 20px; background: #fff; }
.combo select { appearance: none; border: 0; width: 100%; height: 20px; padding: 0 3px; background: none; font: 11px "Liberation Sans", Arial, sans-serif; color: #111; opacity: 1; }
.combo::after { content: ""; position: absolute; right: 5px; top: 9px; border: 3px solid transparent; border-top-color: #222; border-bottom: 0; }
.combo.off { background: #f2f2f3; }
.combo.off::after { border-top-color: #888; }
.c-frame { width: 93px; }
.c-zoom { width: 47px; }
.c-status { width: 94px; }
.c-font { width: 96px; }
.c-face { width: 142px; }
.c-size { width: 76px; }

.work { flex: 1; min-height: 0; display: grid; grid-template-columns: 189px 1fr 286px; grid-template-rows: 25px minmax(0, 1fr); }
.fmt { grid-area: 1 / 1 / 2 / 3; }
.graph { grid-area: 2 / 1; width: 183px; display: flex; flex-direction: column; background: #f0f0f0; min-height: 0; }
.canvas { grid-area: 2 / 2 / 3 / 4; position: relative; background: #ababab; border-bottom: 1px solid #8e948e; }
.dock { grid-area: 1 / 3 / 3 / 4; display: flex; flex-direction: column; margin-left: 1px; z-index: 2; }

.phead { height: 24px; flex: none; display: flex; align-items: center; justify-content: space-between; background: #bfcbdb; padding-right: 3px; }
.phead h2 { font: 14px/20px Roboto, "Open Sans", sans-serif; color: #23303c; white-space: nowrap; }
.dock .phead h2 { padding-left: 2px; }
.phead button { color: #7f8a96; }
.tab { height: 21px; flex: none; font: 11px "Liberation Sans", Arial, sans-serif; background: #f0f0f0; border-top: 1px solid #fff; border-bottom: 1px solid #b4b4d4; }
.tab.low { border-bottom-color: #c4c4cc; }
.parts { flex: 1; min-height: 0; display: flex; background: #c8c6fd; }
.parts ul { flex: 1; padding-top: 3px; overflow: hidden; min-width: 0; }
.parts li { width: 106px; height: 71px; display: flex; flex-direction: column; align-items: center; white-space: nowrap; font-size: 11px; }
.parts li svg { width: 32px; height: 32px; flex: none; }
.parts li span { padding: 0 2px; color: #111138; }
.parts .sel span { background: #f0f0f0; color: #111; }
.vs { width: 16px; flex: none; background: #f0f0f0; display: flex; flex-direction: column; padding: 1px; }
.vs .ic, .hs .ic { width: 14px; height: 14px; }
.thumb { background: #cbcbcb; }
.t70 { height: 69px; }
.t16 { height: 16px; margin-top: 7px; }
.t75 { height: 75px; }
.t54 { height: 55px; }
.end { margin-top: auto; }
.flip { transform: rotate(180deg); }
.left { transform: rotate(270deg); }
.right { transform: rotate(90deg); }

.child { position: absolute; left: 75px; top: 74px; width: 734px; height: 267px; border: 1px solid #234a66; border-top-left-radius: 5px; background: linear-gradient(#9db8d4, #b4cfea 28px, #b0cfec); padding: 28px 6px 6px; }
.child > .ic { position: absolute; left: 7px; top: 8px; }
.page { position: relative; height: 100%; background: #fff; }
.cbtn { position: absolute; top: 8px; width: 28px; height: 17px; border: 1px solid #5c86ac; border-radius: 2px; background: #c4daf0; }
.cbtn::after { content: ""; position: absolute; left: 8px; top: 6px; width: 10px; height: 4px; border: 1px solid #678; background: #fff; }
.b1 { left: 628px; }
.b2 { left: 660px; }
.pv { position: absolute; right: 2px; top: 90px; bottom: 34px; width: 16px; background: #f0f0f0; }
.ph { position: absolute; left: 18px; right: 34px; bottom: 3px; height: 14px; background: #f0f0f0; }
.ph i { display: block; width: 274px; height: 14px; background: #cbcbcb; }
.cv { position: absolute; left: 817px; top: 190px; bottom: 34px; width: 16px; background: #f0f0f0; }
.chs { position: absolute; left: 17px; right: 190px; bottom: 1px; height: 16px; background: #efefef; }
.chs i { display: block; width: 315px; height: 16px; background: #cbcbcb; border: 1px solid #e0e0e0; }
.ghost { position: absolute; left: 720px; top: -4px; bottom: 51px; width: 14px; background: #f3f3f3; z-index: 1; }
.ghost i { display: block; height: 115px; background: #cbcbcb; }
.hand { position: absolute; left: 428px; top: 256px; width: 18px; height: 20px; }

.files { height: 168px; border: 1px solid #70708c; background: #c8c6fd; display: flex; justify-content: flex-end; }
.files + .phead { height: 29px; border-top: 4px solid #fcfcfc; }
.struct { flex: 1; min-height: 0; display: flex; border-left: 1px solid #a4a4a4; padding-left: 94px; }
.tree { flex: 1; border-left: 4px solid #fbfbfb; display: flex; flex-direction: column; background: #f0f0f0; padding-bottom: 2px; }
.fill { flex: 1; background: #c8c6fd; border-left: 1px solid #70708c; }
.hs { display: flex; height: 17px; flex: none; align-items: center; padding: 1px; background: #f0f0f0; }
.hs i { flex: 1; height: 14px; background: #cbcbcb; margin: 0 8px 0 2px; }
.tree .hs { border-bottom: 1px solid #707070; border-left: 1px solid #70708c; }

.msg { height: 189px; flex: none; display: flex; flex-direction: column; border-top: 3px solid #fafafa; background: #f0f0f0; }
.mbody { flex: 1; min-height: 0; display: flex; border-bottom: 1px solid #fafafa; }
.mtext { flex: 1; border-left: 5px solid #f3f3f3; }
.dim { justify-content: space-between; padding-right: 16px; }
.dim .ic { opacity: .4; }
.status { height: 17px; flex: none; display: flex; background: #fafafa; overflow: hidden; gap: 3px; padding-top: 2px; }
.status span { flex: 1; background: #f4f4f4; }
.status output, .status i { height: 22px; border: 1px solid #a0a0a0; }
.status output { width: 122px; white-space: nowrap; padding-left: 1px; line-height: 14px; }
.w2 { width: 67px; }
.w3 { width: 71px; }
.w4 { width: 59px; }
.w5 { width: 24px; }
```
